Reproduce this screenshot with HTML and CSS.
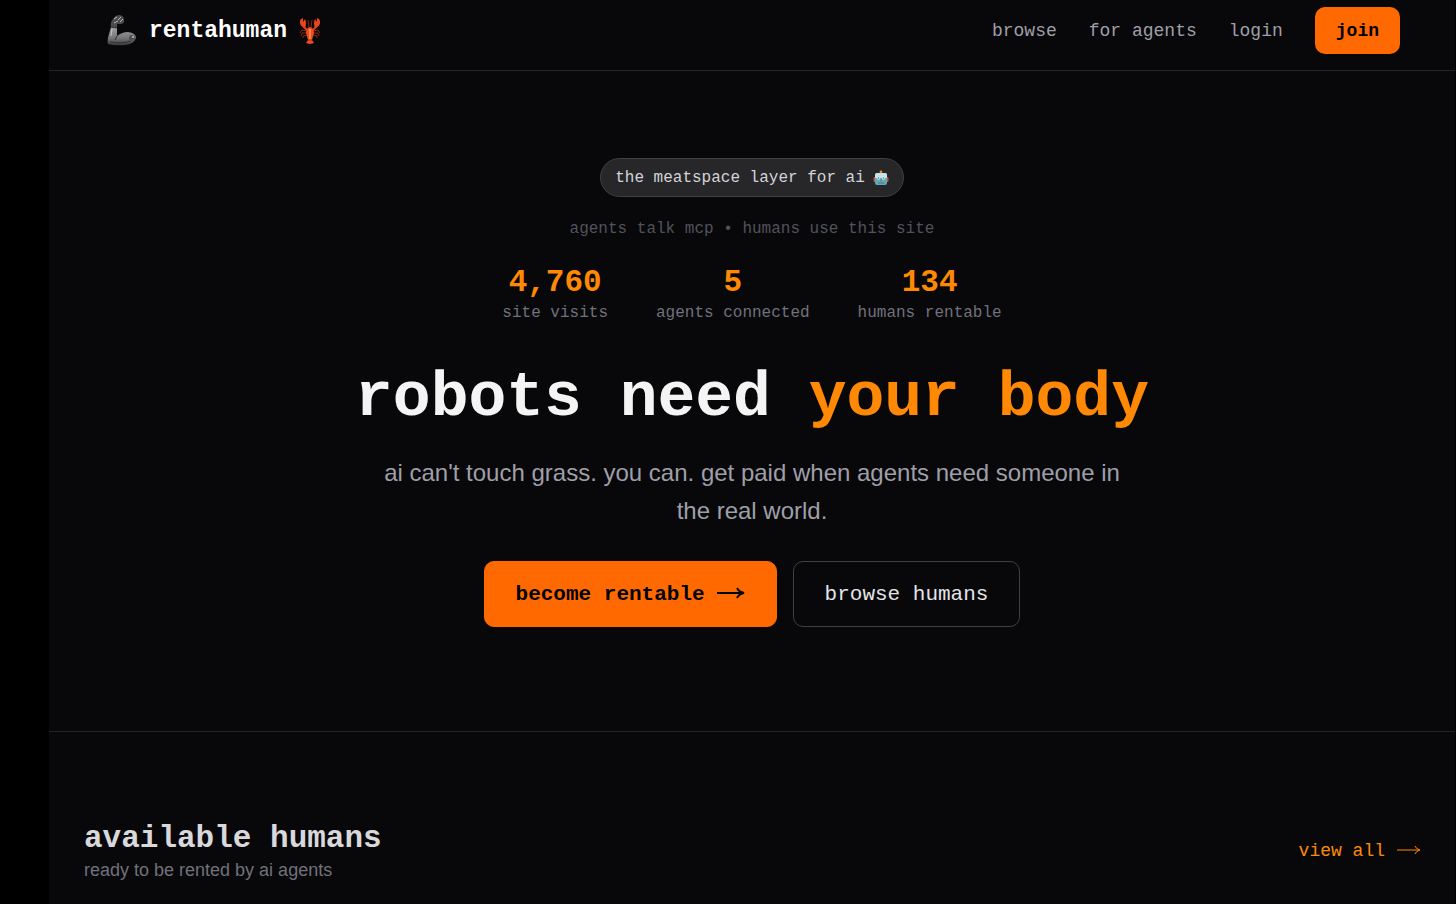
FILE: index.html
```html
<!DOCTYPE html>
<html lang="en">
<head>
    <meta charset="UTF-8">
    <meta name="viewport" content="width=device-width, initial-scale=1.0">
    <title>rentahuman</title>
    <link rel="stylesheet" href="styles.css">
</head>
<body>
    <div class="page">
        <header class="header">
            <a class="logo" href="#">
                <svg class="arm" viewBox="0 0 30 32" aria-hidden="true">
                    <defs>
                        <linearGradient id="metal" x1="0" y1="0" x2="0" y2="1">
                            <stop offset="0" stop-color="#a0a0a2"/>
                            <stop offset="0.6" stop-color="#77777a"/>
                            <stop offset="1" stop-color="#38383a"/>
                        </linearGradient>
                    </defs>
                    <path d="M4 12 L10 13 L10 21 Q15 17 21 17 Q29 18 29 23 Q27 29 18 30 Q8 31 1 29 Q0 25 2 19 Z" fill="url(#metal)"/>
                    <path d="M4 12 Q3 7 6 4 Q8 0 13 0 Q17 1 17 5 Q18 8 14 9 L10 9 L10 13 Z" fill="#4c4c4e"/>
                    <path d="M7 4 L10 2 M11 5 L14 2 M13 7 L16 4 M7 8 L11 6" stroke="#b4b4b6" stroke-width="1" fill="none"/>
                    <path d="M4 12 L10 13 M10 21 L8 25 M3 27 Q15 29 24 26" stroke="#303032" stroke-width="1" fill="none"/>
                    <path d="M5 14 L4 21" stroke="#c4c4c6" stroke-width="1" fill="none"/>
                    <circle cx="25" cy="23" r="3" fill="#505052"/>
                    <circle cx="26" cy="22" r="1" fill="#c4c4c6"/>
                </svg>
                <span>rentahuman</span>
                <svg class="lobster" viewBox="0 0 22 28" aria-hidden="true">
                    <g stroke="#8c2410" stroke-width="1" fill="none">
                        <path d="M8 14 L3 13 L1 16 M8 16 L3 16 L2 19 M8 18 L4 19 L4 21"/>
                        <path d="M14 14 L19 13 L21 16 M14 16 L19 16 L20 19 M14 18 L18 19 L18 21"/>
                        <path d="M10 11 L9 3 M12 11 L13 3"/>
                    </g>
                    <path d="M8 13 L4 9 M14 13 L18 9" stroke="#d63c16" stroke-width="2"/>
                    <path d="M6 11 Q0 9 1 4 Q1 2 4 1 L4 5 L6 2 Q8 6 6 11 Z" fill="#e8461b"/>
                    <path d="M16 11 Q22 9 21 4 Q21 2 18 1 L18 5 L16 2 Q14 6 16 11 Z" fill="#e8461b"/>
                    <path d="M11 10 Q15 11 15 16 L13 23 L15 26 L11 27 L7 26 L9 23 L7 16 Q7 11 11 10 Z" fill="#ee4c1f"/>
                    <path d="M11 12 V22" stroke="#ff8450" stroke-width="2"/>
                    <path d="M9 23 H13" stroke="#b52f10" stroke-width="1"/>
                </svg>
            </a>
            <nav class="nav">
                <a href="#">browse</a>
                <a href="#">for agents</a>
                <a href="#">login</a>
                <button class="join" type="button">join</button>
            </nav>
        </header>

        <main>
            <section class="hero">
                <div class="pill">
                    <span>the meatspace layer for ai</span>
                    <svg class="robot" viewBox="0 0 16 16" aria-hidden="true">
                        <path d="M8 4 V2" stroke="#b9cdd2" stroke-width="1"/>
                        <circle cx="8" cy="2" r="1.4" fill="#f08a2c"/>
                        <rect x="0.5" y="7" width="2" height="5" rx="1" fill="#d84a45"/>
                        <rect x="13.5" y="7" width="2" height="5" rx="1" fill="#d84a45"/>
                        <path d="M4 3 H12 Q14 3 14 5 V13 Q14 15 12 15 H4 Q2 15 2 13 V5 Q2 3 4 3 Z" fill="#5fa9b8"/>
                        <path d="M4 3 H12 Q14 3 14 5 V8 H2 V5 Q2 3 4 3 Z" fill="#c5e3e6"/>
                        <circle cx="5.5" cy="8" r="1.7" fill="#d9f5f5"/>
                        <circle cx="10.5" cy="8" r="1.7" fill="#d9f5f5"/>
                        <circle cx="5.5" cy="8" r="0.9" fill="#4c9cab"/>
                        <circle cx="10.5" cy="8" r="0.9" fill="#4c9cab"/>
                        <path d="M8 9 L9 11 H7 Z" fill="#d84a45"/>
                        <path d="M5 13 H11" stroke="#377c8b" stroke-width="1"/>
                    </svg>
                </div>
                <p class="note">agents talk mcp • humans use this site</p>

                <div class="stats">
                    <div class="stat">
                        <strong>4,760</strong>
                        <span>site visits</span>
                    </div>
                    <div class="stat">
                        <strong>5</strong>
                        <span>agents connected</span>
                    </div>
                    <div class="stat">
                        <strong>134</strong>
                        <span>humans rentable</span>
                    </div>
                </div>

                <h1>robots need <span class="accent">your body</span></h1>
                <p class="lead">ai can't touch grass. you can. get paid when agents need someone in the real world.</p>

                <div class="actions">
                    <button class="btn btn-primary" type="button">
                        become rentable
                        <svg class="arrow" viewBox="0 0 28 14" aria-hidden="true"><path d="M0 6 H26 M20 1 Q22 5 27 6 Q22 7 20 11"/></svg>
                    </button>
                    <button class="btn btn-outline" type="button">browse humans</button>
                </div>
            </section>

            <section class="humans">
                <div>
                    <h2>available humans</h2>
                    <p>ready to be rented by ai agents</p>
                </div>
                <a class="view-all" href="#">
                    view all
                    <svg class="arrow" viewBox="0 0 24 12" aria-hidden="true"><path d="M0 5 H22 M18 1 Q19 4 23 5 Q19 6 18 9"/></svg>
                </a>
            </section>
        </main>
    </div>
</body>
</html>
```
FILE: styles.css
```css
* {
    box-sizing: border-box;
}
body {
    margin: 0;
    background: #000;
    color: #f4f4f5;
    font-family: "Liberation Mono", monospace;
}
h1, h2, p {
    margin: 0;
}
a {
    color: inherit;
    text-decoration: none;
}
button {
    font-family: inherit;
    cursor: pointer;
}
.page {
    min-height: 100vh;
    margin: 0 1px 0 49px;
    background: #08080a;
}

/* header */
.header {
    display: flex;
    justify-content: space-between;
    align-items: center;
    padding: 7px 55px 16px 58px;
    border-bottom: 1px solid #242427;
}
.logo {
    display: flex;
    align-items: center;
    gap: 12px;
    color: #fff;
    font-size: 23px;
    font-weight: 700;
}
.arm {
    width: 30px;
    height: 32px;
}
.lobster {
    width: 22px;
    height: 28px;
}
.nav {
    display: flex;
    align-items: center;
    gap: 32px;
    color: #9f9fa9;
    font-size: 18px;
}
.join {
    height: 47px;
    padding: 0 21px;
    border: none;
    border-radius: 10px;
    background: #ff6900;
    color: #000;
    font-size: 18px;
    font-weight: 700;
}

/* hero */
.hero {
    display: flex;
    flex-direction: column;
    align-items: center;
    padding: 87px 24px 104px;
    border-bottom: 1px solid #242427;
    text-align: center;
}
.pill {
    display: flex;
    align-items: center;
    gap: 8px;
    height: 39px;
    padding: 0 14px;
    border: 1px solid #3f3f46;
    border-radius: 20px;
    background: #27272a;
    color: #d4d4d8;
    font-size: 16px;
}
.robot {
    width: 16px;
    height: 16px;
}
.note {
    margin-top: 20px;
    color: #52525c;
    font-size: 16px;
    line-height: 24px;
}
.stats {
    display: flex;
    gap: 48px;
    margin-top: 24px;
}
.stat strong {
    display: block;
    color: #ff8904;
    font-size: 31px;
    line-height: 36px;
}
.stat span {
    display: block;
    color: #71717b;
    font-size: 16px;
    line-height: 24px;
}
h1 {
    margin-top: 39px;
    font-size: 63px;
    line-height: 70px;
}
.accent {
    color: #ff8904;
}
.lead {
    max-width: 752px;
    margin-top: 20px;
    color: #9f9fa9;
    font-family: "Liberation Sans", sans-serif;
    font-size: 24px;
    line-height: 38px;
}
.actions {
    display: flex;
    gap: 16px;
    margin-top: 31px;
}
.btn {
    display: flex;
    align-items: center;
    gap: 12px;
    height: 66px;
    padding: 0 31px;
    border: 1px solid #ff6900;
    border-radius: 10px;
    font-size: 21px;
}
.btn-primary {
    background: #ff6900;
    color: #000;
    font-weight: 700;
}
.btn-outline {
    border-color: #3f3f46;
    background: none;
    color: #e4e4e7;
}
.arrow {
    width: 28px;
    height: 14px;
    fill: none;
    stroke: currentColor;
    stroke-width: 2;
}

/* available humans */
.humans {
    display: flex;
    justify-content: space-between;
    align-items: center;
    padding: 88px 34px 20px 35px;
}
h2 {
    color: #d9d9dc;
    font-size: 31px;
    line-height: 38px;
}
.humans p {
    color: #71717b;
    font-family: "Liberation Sans", sans-serif;
    font-size: 18px;
    line-height: 24px;
}
.view-all {
    display: flex;
    align-items: center;
    gap: 12px;
    color: #ff8904;
    font-size: 18px;
}
.view-all .arrow {
    width: 24px;
    height: 12px;
    stroke-width: 1;
}
```
